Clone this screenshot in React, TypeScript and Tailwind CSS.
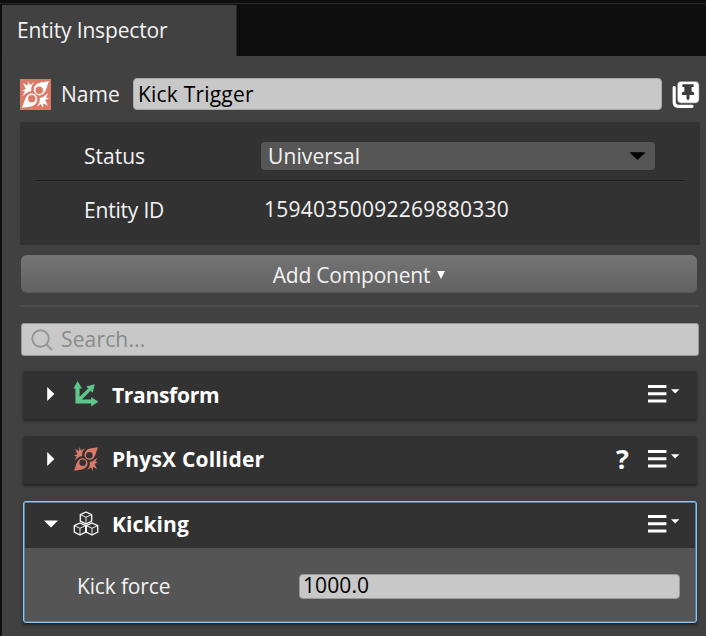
import type { ReactNode } from "react";

function ColliderHalf() {
  return (
    <>
      <path
        fillRule="evenodd"
        d="M24 .2C19.500 1 15 .8 12.300 3.400C10.300 5.300 10 8 11 10.100C12.500 13.200 16.700 13.700 19.300 11.200C21.800 8.500 22 4.600 24 .2ZM15.300 4.900A3.300 3.300 0 1 1 15.300 11.500A3.300 3.300 0 1 1 15.300 4.900Z"
      />
      <path d="M1 1.800L5 4.300L5.400 0L7.100 3.500L10.800 1.200L9 4.100C8.100 5.800 8 7.400 8.300 9C6.700 9.100 5.200 9.800 4.200 10.700L.4 13.400L2.700 9.400L0 8.400L3.400 7.200Z" />
    </>
  );
}

function ColliderGlyph({ className }: { className: string }) {
  return (
    <svg viewBox="0 0 24 24" className={className} fill="currentColor">
      <ColliderHalf />
      <g transform="rotate(180 12 12)">
        <ColliderHalf />
      </g>
    </svg>
  );
}

function TransformGlyph() {
  return (
    <svg viewBox="0 0 26 26" className="h-[26px] w-[26px] text-[#5fc78a]" fill="currentColor">
      <path d="M4.600 0L9 7.400H6.600V15.800L15.200 7.500L13.300 5.600L21.800 3.200L19.600 11.700L17.600 9.700L8.900 18.400H18.200V16L25.400 20.800L18.200 25.600V22.400H2.400V7.400H.4Z" />
    </svg>
  );
}

function CubesGlyph() {
  return (
    <svg viewBox="0 0 26 26" className="h-[26px] w-[26px]" fill="none" stroke="white" strokeWidth="1.3" strokeLinejoin="round">
      {["translate(13 7)", "translate(7 18)", "translate(19 18)"].map((t) => (
        <g key={t} transform={t}>
          <path d="M0 -6L5.700 -3.400V3.200L0 6L-5.700 3.200V-3.400Z" />
          <path d="M-5.700 -3.400L0 -.7L5.700 -3.400M0 -.7V6" strokeWidth=".9" />
        </g>
      ))}
    </svg>
  );
}

function Arrow({ open }: { open?: boolean }) {
  return (
    <svg viewBox="0 0 16 16" className="h-4 w-4 shrink-0" fill="white">
      <path d={open ? "M1 4.500H15L8 11.500Z" : "M4.200 1V15L11.400 8Z"} />
    </svg>
  );
}

function MenuGlyph() {
  return (
    <svg viewBox="0 0 34 20" className="h-5 w-[34px]" fill="white">
      <path d="M1 1h18.400v3H1zM1 8.200h18.400v3H1zM1 15.500h18.400v3H1zM24 5.300h8.400L28.200 9.400z" />
    </svg>
  );
}

function CardHeader({ title, icon, open, help }: { title: ReactNode; icon: ReactNode; open?: boolean; help?: boolean }) {
  return (
    <>
      <Arrow open={open} />
      <span className="ml-[14px] flex w-[26px] shrink-0 justify-center">{icon}</span>
      <span className="ml-[13px] grow font-bold">{title}</span>
      {help && <span className="mr-[18px] text-[27px] leading-6 font-bold">?</span>}
      <MenuGlyph />
    </>
  );
}

export default function App() {
  return (
    <div className="h-[636px] w-[706px] overflow-hidden bg-[#414141] font-['Open_Sans',sans-serif] text-[21px] leading-7 whitespace-nowrap text-[#f2f2f2]">
      <div className="h-[5px] border-b border-[#121212] bg-[#0e0e0e] pt-[3px]">
        <div className="h-px bg-[#292929]" />
      </div>
      <div className="flex h-[51px] bg-[#0e0e0e] pl-[2px]">
        <div className="flex w-[235px] items-center border-r border-[#2a2a2a] bg-[#414141] pb-px pl-[15px]">
          <span className="tracking-[-0.16px]">Entity Inspector</span>
        </div>
      </div>
      <div className="h-[580px] border-l-2 border-[#101010] pt-[22px] pl-[18px]">
        <div className="flex h-8 items-center">
          <div className="flex h-[31px] w-[31px] items-center justify-center bg-[#dc7a68]">
            <ColliderGlyph className="h-[27px] w-[27px] text-white" />
          </div>
          <span className="ml-[10px] w-[72px]">Name</span>
          <div className="flex h-8 w-[529px] items-center rounded-[4px] border border-[#aaa] bg-[#c8c8c8] pl-1 text-black">
            <span className="tracking-[0.2px]">Kick Trigger</span>
          </div>
          <svg viewBox="0 0 28 28" className="ml-[10px] h-7 w-7">
            <path d="M2.200 7.500V22Q2.200 26.300 6.500 26.300H20" fill="none" stroke="white" strokeWidth="3.200" strokeLinecap="round" />
            <rect x="5.200" y="1.300" width="22" height="21.900" rx="4" fill="white" stroke="#414141" strokeWidth=".6" />
            <path d="M10.400 4.200h11.200v2.900h-2v4.500l2.500 1v2.400h-4.600v3.400l-1.500 2.200l-1.500-2.200v-3.400h-4.600v-2.400l2.500-1V7.100h-2z" fill="#3c3c3c" />
          </svg>
        </div>
        <div className="mt-3 h-[123px] w-[680px] bg-[#323232] pt-5">
          <div className="flex h-7 items-center pl-16">
            <span className="w-[177px]">Status</span>
            <div className="flex h-7 w-[394px] items-center justify-between rounded-[4px] bg-[#565656] pr-[9px] pl-[7px]">
              <span className="tracking-[0.1px]">Universal</span>
              <svg viewBox="0 0 17 8" className="h-2 w-[17px]">
                <path d="M.3 .3H16.700L8.500 8Z" fill="black" />
              </svg>
            </div>
          </div>
          <div className="mt-[10px] ml-[15px] h-[2px] w-[650px] border-t border-[#1e1e1e] bg-[#383838]" />
          <div className="mt-[12px] flex items-center pl-16">
            <span className="w-[180px] pt-[2px] tracking-[-0.2px]">Entity ID</span>
            <span className="pb-px tracking-[0.24px]">15940350092269880330</span>
          </div>
        </div>
        <div className="mt-[10px] ml-px flex h-[38px] w-[676px] items-center justify-center rounded-[6px] border-b border-[#575757] bg-linear-to-b from-[#747474] to-[#626262] pt-[2px]">
          <span className="tracking-[-0.2px]">Add Component</span>
          <svg viewBox="0 0 8 8" className="ml-[7px] h-2 w-2" fill="white">
            <path d="M0 0H8L4 8Z" />
          </svg>
        </div>
        <div className="mt-3 h-[2px] w-[679px] bg-[#4c4c4c]" />
        <div className="mt-4 ml-px flex h-[33px] w-[678px] items-center rounded-[3px] border border-[#999] bg-[#c8c8c8] text-[#8a8a8a]">
          <svg viewBox="0 0 22 22" className="ml-[9px] h-[22px] w-[22px]" fill="none" stroke="#959595" strokeWidth="1.900">
            <circle cx="9.500" cy="9.500" r="8.200" />
            <path d="M15.400 15.400L21 21" />
          </svg>
          <span className="ml-2 pb-px tracking-[0.15px]">Search...</span>
        </div>
        <div className="mt-[15px] ml-[3px] flex h-12 w-[674px] items-center rounded-[3px] bg-[#323232] pr-4 pb-[2px] pl-5 text-white shadow-[0_2px_3px_#222]">
          <CardHeader title={<span className="inline-block pt-[2px] tracking-[-0.3px]">Transform</span>} icon={<TransformGlyph />} />
        </div>
        <div className="mt-[17px] ml-[3px] flex h-12 w-[674px] items-center rounded-[3px] bg-[#323232] pr-4 pb-[2px] pl-5 text-white shadow-[0_2px_3px_#222]">
          <CardHeader title={<span className="tracking-[0.18px]">PhysX Collider</span>} help icon={<ColliderGlyph className="h-6 w-6 text-[#dc7a68]" />} />
        </div>
        <div className="mt-[17px] ml-[3px] h-[122px] w-[674px] overflow-hidden rounded-[3px] border border-[#8cc8f6] bg-[#555] shadow-[0_2px_3px_#222,inset_0_0_0_1px_#5d7f99]">
          <div className="mx-px mt-px flex h-[45px] items-center bg-[#323232] pr-[14px] pb-[3px] pl-[18px] text-white">
            <CardHeader title={<span className="tracking-[0.1px]">Kicking</span>} open icon={<CubesGlyph />} />
          </div>
          <div className="flex h-[75px] items-center pl-[53px]">
            <span className="w-[222px] tracking-[-0.15px]">Kick force</span>
            <div className="mt-px flex h-[25px] w-[381px] items-center rounded-[4px] border border-[#999] bg-[#c8c8c8] pb-[2px] pl-[3px] text-black">
              <span className="tracking-[0.1px]">1000.0</span>
            </div>
          </div>
        </div>
      </div>
    </div>
  );
}
